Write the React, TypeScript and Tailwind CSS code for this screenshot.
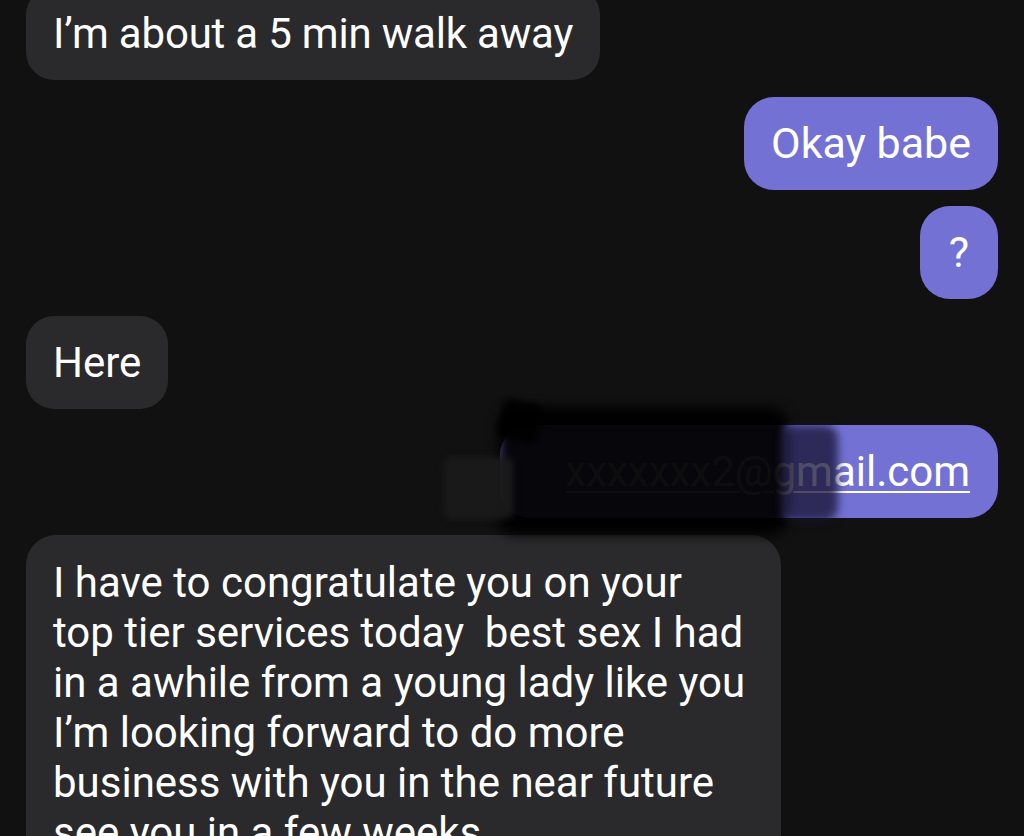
export default function App() {
  return (
    <div className="h-[836px] w-[1024px] overflow-hidden bg-[#111111] px-[26px] font-['Roboto',sans-serif] text-white">
      <div className="-mt-[13px] flex flex-col gap-[16.5px]">
        {/* incoming */}
        <div className="flex">
          <div className="rounded-[28px] bg-[#2a2a2c] px-[27px] py-[21px] text-[42px] leading-[51px] tracking-[-0.2px]">
            I’m about a 5 min walk away
          </div>
        </div>

        {/* outgoing */}
        <div className="flex justify-end">
          <div className="rounded-[30px] bg-[#7471d4] px-[27px] py-[21px] text-[43px] leading-[51px]">
            Okay babe
          </div>
        </div>
        <div className="flex justify-end">
          <div className="w-[78px] rounded-[30px] bg-[#7471d4] py-[21px] text-center text-[43px] leading-[51px]">
            ?
          </div>
        </div>

        <div className="flex">
          <div className="rounded-[28px] bg-[#2a2a2c] px-[27px] py-[21px] text-[42px] leading-[51px]">
            Here
          </div>
        </div>

        {/* email, scribbled over */}
        <div className="relative flex justify-end">
          <div className="w-[498px] whitespace-nowrap rounded-[30px] bg-[#7471d4] px-[28px] py-[21px] text-right text-[42px] leading-[51px] underline decoration-[1.5px] underline-offset-[5px]">
            xxxxxxx2@gmail.com
          </div>
          <div className="pointer-events-none absolute -top-[18px] left-[472px] h-[128px] w-[290px] rounded-[18px] bg-black/95 blur-[6px]" />
          <div className="pointer-events-none absolute -top-[24px] left-[474px] h-[40px] w-[40px] rotate-12 rounded-[6px] bg-black/90 blur-[3px]" />
          <div className="pointer-events-none absolute top-[0px] left-[756px] h-[96px] w-[56px] rounded-[14px] bg-[#151330]/75 blur-[4px]" />
          <div className="pointer-events-none absolute top-[32px] left-[418px] h-[62px] w-[70px] rounded-[8px] bg-[#1b1b1b]/90 blur-[3px]" />
        </div>

        <div className="flex">
          <div className="w-[755px] rounded-[30px] bg-[#2a2a2c] px-[27px] pt-[23px] pb-[40px] text-[42px] leading-[50px]">
            I have to congratulate you on your
            <br />
            top tier services today&nbsp; best sex I had
            <br />
            in a awhile from a young lady like you
            <br />
            I’m looking forward to do more
            <br />
            business with you in the near future
            <br />
            see you in a few weeks
          </div>
        </div>
      </div>
    </div>
  );
}
